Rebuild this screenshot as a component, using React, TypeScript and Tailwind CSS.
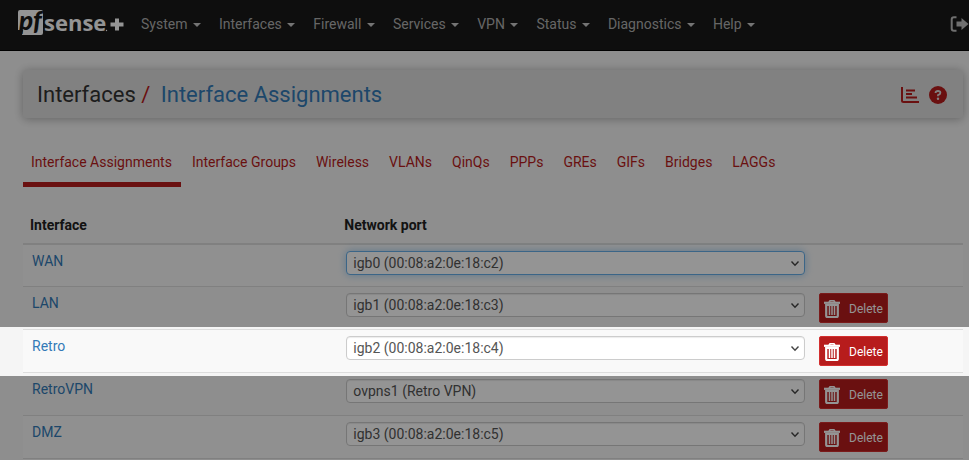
import { useState } from 'react';

const MENUS = ['System', 'Interfaces', 'Firewall', 'Services', 'VPN', 'Status', 'Diagnostics', 'Help'];

const TABS = [
  'Interface Assignments',
  'Interface Groups',
  'Wireless',
  'VLANs',
  'QinQs',
  'PPPs',
  'GREs',
  'GIFs',
  'Bridges',
  'LAGGs',
];

const PORTS = [
  'igb0 (00:08:a2:0e:18:c2)',
  'igb1 (00:08:a2:0e:18:c3)',
  'igb2 (00:08:a2:0e:18:c4)',
  'ovpns1 (Retro VPN)',
  'igb3 (00:08:a2:0e:18:c5)',
];

interface Assignment {
  name: string;
  port: string;
  fixed?: boolean;
  focused?: boolean;
  spotlight?: boolean;
}

const ASSIGNMENTS: Assignment[] = [
  { name: 'WAN', port: PORTS[0], fixed: true, focused: true },
  { name: 'LAN', port: PORTS[1] },
  { name: 'Retro', port: PORTS[2], spotlight: true },
  { name: 'RetroVPN', port: PORTS[3] },
  { name: 'DMZ', port: PORTS[4] },
];

function Logo() {
  return (
    <svg viewBox="0 -4 106 38" className="block w-[106px] h-[38px] shrink-0 overflow-visible" role="img" aria-label="pfSense plus">
      <path d="M2 0h21a2 2 0 0 1 2 2v21a2 2 0 0 1-2 2H4l1-5H0V2a2 2 0 0 1 2-2z" fill="#fff" />
      <text x="1" y="20" fontFamily="Lato, sans-serif" fontWeight="900" fontStyle="italic" fontSize="26" fill="#191919">
        pf
      </text>
      <text x="26" y="21" fontFamily="'Open Sans', sans-serif" fontWeight="700" fontSize="22" fill="#fff">
        sense
      </text>
      <circle cx="88.500" cy="20.500" r="0.700" fill="#fff" />
      <path d="M97 8.500h4v4h4.500v4H101v4h-4v-4h-4.500v-4H97z" fill="#fff" />
    </svg>
  );
}

function TrashIcon() {
  return (
    <svg viewBox="0 0 16 18" className="w-4 h-[18px] shrink-0" fill="none" stroke="#fff" aria-hidden="true">
      <path d="M5 2.500 6 0.800h4l1 1.700" strokeWidth="1.600" />
      <path d="M0 2.800h16" strokeWidth="2.200" />
      <path d="M2.200 5v11q0 1 1 1h9.600q1 0 1-1V5z" strokeWidth="2.200" />
      <path d="M5.500 6v9M8 6v9M10.500 6v9" strokeWidth="1.500" />
    </svg>
  );
}

function Navbar() {
  return (
    <nav className="h-[51px] pl-[18px] flex items-center justify-between bg-[#191919] border-b border-black text-[#b0b0b0] overflow-hidden">
      <div className="flex items-center">
        <a href="#" className="mr-[8px]">
          <Logo />
        </a>
        {MENUS.map((menu) => (
          <button key={menu} type="button" className="px-[9px] pb-[2px] whitespace-nowrap">
            {menu}{' '}
            <span className="inline-block align-middle ml-[2px] border-x-4 border-x-transparent border-t-4 border-t-[#c8c8c8]" />
          </button>
        ))}
      </div>
      <a href="#" aria-label="Logout" className="shrink-0 pb-[3px]">
        <svg viewBox="0 0 18 16" className="block w-[19px] h-4" aria-hidden="true">
          <path d="M6 1.200H3.500A2.300 2.300 0 0 0 1.200 3.500v9a2.300 2.300 0 0 0 2.300 2.300H6" fill="none" stroke="#c0c0c0" strokeWidth="2" />
          <path d="M6 5.500h5V2l7 6-7 6v-3.500H6z" fill="#c0c0c0" />
        </svg>
      </a>
    </nav>
  );
}

function PageTitle() {
  return (
    <header className="h-[48px] pl-[14px] pr-4 pt-[2px] flex items-center justify-between rounded bg-[#dfdfdf] shadow-[0_1px_10px_rgba(0,0,0,0.3)]">
      <h1 className="text-[22px] leading-6 text-[#333]">
        Interfaces <span className="text-[#b71c1c] mr-[5px]">/</span>{' '}
        <a href="#" className="text-[#337ab7]">Interface Assignments</a>
      </h1>
      <div className="flex items-center gap-[10px]">
        <a href="#" aria-label="Status">
          <svg viewBox="0 0 18 16" className="block w-[18px] h-4" fill="none" stroke="#b71c1c" strokeWidth="2" aria-hidden="true">
            <path d="M1 0v13.500q0 1.500 1.500 1.500H18M5 3.500h9M5 7h6M5 10.500h11" />
          </svg>
        </a>
        <a href="#" aria-label="Help">
          <svg viewBox="0 0 18 18" className="block w-[18px] h-[18px]" aria-hidden="true">
            <circle cx="9" cy="9" r="9" fill="#b71c1c" />
            <path d="M6.500 7q.2-2 2.500-2t2.400 1.800Q11.400 8.400 9 9.200v1" fill="none" stroke="#dfdfdf" strokeWidth="1.800" />
            <circle cx="9" cy="12.800" r="1.200" fill="#dfdfdf" />
          </svg>
        </a>
      </div>
    </header>
  );
}

function AssignmentRow({ row }: { row: Assignment }) {
  const [port, setPort] = useState(row.port);

  return (
    <tr className="relative h-[43px] first:h-[42px] odd:bg-[#f9f9f9] align-top border-b border-[#ddd]">
      <td className="pl-[9px] pt-[6px]">
        <a href="#" className="text-[#337ab7]">{row.name}</a>
        {/* Dims the whole page except this row */}
        {row.spotlight && (
          <span className="absolute z-10 -top-[2px] -bottom-[5px] -inset-x-6 pointer-events-none shadow-[0_0_0_2000px_rgba(0,0,0,0.42)]" />
        )}
      </td>
      <td className="pl-[10px] pr-1 pt-[6px]">
        <div className="relative">
          <select
            aria-label={`Network port for ${row.name}`}
            value={port}
            onChange={(e) => setPort(e.target.value)}
            className={`block appearance-none w-full h-6 px-[6px] rounded border bg-white text-[#555] ${
              row.focused
                ? 'border-[#66afe9] shadow-[0_0_8px_rgba(102,175,233,0.6)]'
                : 'border-[#ccc] shadow-[inset_0_1px_1px_rgba(0,0,0,0.08)]'
            }`}
          >
            {PORTS.map((p) => (
              <option key={p}>{p}</option>
            ))}
          </select>
          <svg
            viewBox="0 0 8 5"
            className="absolute right-[6px] top-[10px] w-2 h-[5px] pointer-events-none overflow-visible"
            fill="none"
            stroke="#444"
            strokeWidth="1.400"
            aria-hidden="true"
          >
            <path d="M0.500 0.500 4 4.300 7.500 0.500" />
          </svg>
        </div>
      </td>
      <td className="pl-[10px] pt-[6px]">
        {!row.fixed && (
          <button
            type="button"
            className="flex items-center gap-[9px] h-[30px] px-1 pt-[2px] rounded-xs border border-[#d32f2f] bg-[#b71c1c] text-white text-xs"
          >
            <TrashIcon />
            Delete
          </button>
        )}
      </td>
    </tr>
  );
}

export default function App() {
  const [activeTab, setActiveTab] = useState(TABS[0]);

  return (
    <div className="relative min-h-screen overflow-hidden bg-[#f5f5f5] font-['Roboto',sans-serif] text-sm leading-5 text-[#212121]">
      <Navbar />
      <main className="pl-[23px] pr-[6px] pt-[19px]">
        <PageTitle />

        <div className="flex gap-[3px] mt-[24px]">
          {TABS.map((tab) => (
            <button
              key={tab}
              type="button"
              onClick={() => setActiveTab(tab)}
              className={`h-[45px] pl-2 pr-[9px] border-b-5 text-[#b71c1c] whitespace-nowrap ${
                activeTab === tab ? 'border-[#b71c1c]' : 'border-transparent'
              }`}
            >
              {tab}
            </button>
          ))}
        </div>

        <table className="w-full mt-[19px] table-fixed border-collapse">
          <thead>
            <tr className="h-[38px] border-b-2 border-[#ddd] text-left">
              <th className="w-1/3 pl-[7px] font-bold">Interface</th>
              <th className="pl-2 font-bold">Network port</th>
              <th className="w-[154px]" />
            </tr>
          </thead>
          <tbody>
            {ASSIGNMENTS.map((row) => (
              <AssignmentRow key={row.name} row={row} />
            ))}
          </tbody>
        </table>
      </main>
    </div>
  );
}
